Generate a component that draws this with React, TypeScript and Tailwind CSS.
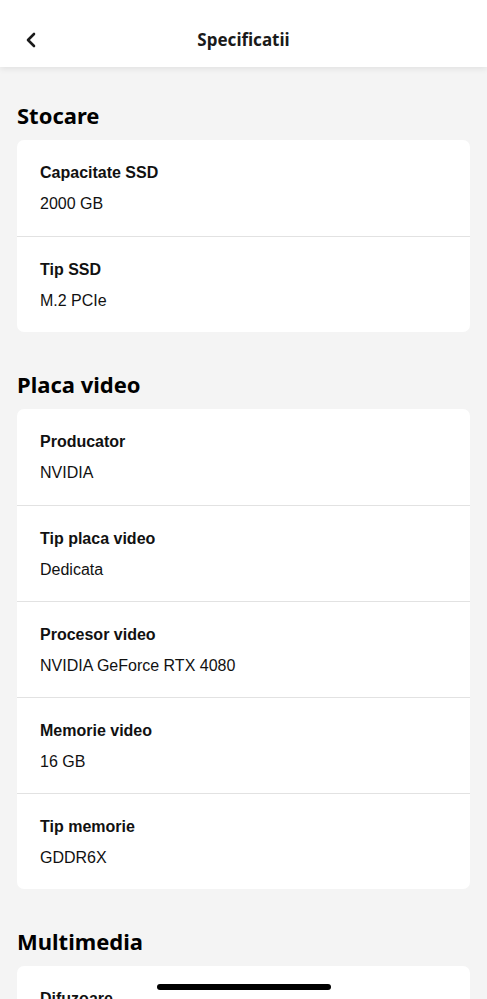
import { ChevronLeft } from "lucide-react";

type Spec = { label: string; value: string };
type Section = { title: string; items: Spec[] };

const sections: Section[] = [
  {
    title: "Stocare",
    items: [
      { label: "Capacitate SSD", value: "2000 GB" },
      { label: "Tip SSD", value: "M.2 PCIe" },
    ],
  },
  {
    title: "Placa video",
    items: [
      { label: "Producator", value: "NVIDIA" },
      { label: "Tip placa video", value: "Dedicata" },
      { label: "Procesor video", value: "NVIDIA GeForce RTX 4080" },
      { label: "Memorie video", value: "16 GB" },
      { label: "Tip memorie", value: "GDDR6X" },
    ],
  },
  {
    title: "Multimedia",
    items: [
      { label: "Difuzoare", value: "Da" },
      { label: "Microfon", value: "Da" },
    ],
  },
];

export default function App() {
  return (
    <div className="relative h-[999px] w-[487px] overflow-hidden bg-[#f4f4f4]">
      <header className="relative z-10 flex h-[67px] items-center justify-center bg-white shadow-[0_2px_6px_rgba(0,0,0,0.08)]">
        <button className="absolute left-[19px] top-[28px] text-[#1a1a1a]">
          <ChevronLeft size={24} strokeWidth={2.6} />
        </button>
        <h1 className="mt-[12px] font-['Noto_Sans',sans-serif] text-[17px] font-bold text-[#1a1a1a]">
          Specificatii
        </h1>
      </header>

      <main className="px-[17px] pt-[33px]">
        {sections.map((s) => (
          <section key={s.title} className="mb-[37px]">
            <h2 className="mb-[10px] h-[30px] font-['Noto_Sans',sans-serif] text-[22px] leading-[30px] font-bold text-black">
              {s.title}
            </h2>
            <div className="overflow-hidden rounded-[7px] bg-white">
              {s.items.map((it, i) => (
                <div
                  key={it.label}
                  className={`h-[96px] px-[23px] pt-[22px] ${i > 0 ? "border-t border-[#e2e2e2]" : ""}`}
                >
                  <div className="font-['Liberation_Sans',sans-serif] text-[16px] leading-[22px] font-bold text-[#111]">
                    {it.label}
                  </div>
                  <div className="mt-[9px] font-['Liberation_Sans',sans-serif] text-[16px] leading-[22px] text-[#111]">
                    {it.value}
                  </div>
                </div>
              ))}
            </div>
          </section>
        ))}
      </main>

      <div className="absolute bottom-[9px] left-[157px] h-[6px] w-[174px] rounded-full bg-black" />
    </div>
  );
}
